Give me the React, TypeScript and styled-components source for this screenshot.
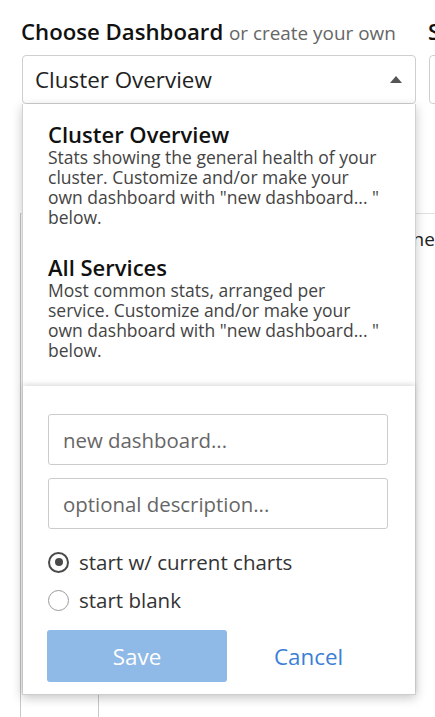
import React from 'react';
import styled, { createGlobalStyle } from 'styled-components';

const GlobalStyle = createGlobalStyle`
  html, body {
    margin: 0;
    padding: 0;
    background: #fff;
    overflow: hidden;
  }
  body {
    font-family: "Open Sans", "Liberation Sans", sans-serif;
    color: #222;
  }
  * {
    box-sizing: border-box;
  }
`;

const Page = styled.div`
  position: relative;
  width: 435px;
  height: 717px;
  overflow: hidden;
  padding-top: 19px;
`;

const Toolbar = styled.div`
  position: relative;
  z-index: 2;
  display: flex;
  gap: 13px;
  padding-left: 22px;
`;

const Field = styled.div`
  position: relative;
  flex: 0 0 394px;
`;

const Label = styled.div`
  height: 26px;
  margin: 0 0 10px -1px;
  font-size: 22.2px;
  font-weight: 600;
  line-height: 26px;
  color: #111;
  white-space: nowrap;
`;

const Hint = styled.span`
  font-size: 18.9px;
  font-weight: 400;
  line-height: 1;
  color: #666;
`;

const Select = styled.div`
  display: flex;
  align-items: center;
  justify-content: space-between;
  height: 49px;
  padding: 0 13px 0 12px;
  border: 1px solid #cfcfcf;
  border-radius: 4px;
  background: #fff;
  font-size: 22.4px;
  color: #222;
  white-space: nowrap;
`;

const Caret = styled.span`
  width: 0;
  height: 0;
  border-left: 6px solid transparent;
  border-right: 6px solid transparent;
  border-bottom: 7px solid #555;
`;

const Menu = styled.div`
  position: absolute;
  top: 100%;
  left: 0;
  width: 394px;
  z-index: 10;
  background: #fff;
  border: 1px solid #d2d2d2;
  border-top: none;
  box-shadow: 0 3px 10px rgba(0, 0, 0, 0.22);
`;

const OptionList = styled.div`
  padding-bottom: 16px;
`;

const Option = styled.div`
  padding: 17px 27px 10px 25px;
  cursor: pointer;
`;

const OptionTitle = styled.div`
  font-size: 22px;
  font-weight: 600;
  line-height: 26px;
  color: #111;
`;

const OptionText = styled.div`
  font-size: 17.5px;
  line-height: 20px;
  color: #444;
`;

const CreateForm = styled.div`
  position: relative;
  padding: 28px 27px 12px 25px;
  box-shadow: 0 -2px 5px rgba(0, 0, 0, 0.13);
`;

const TextInput = styled.input`
  display: block;
  width: 100%;
  height: 51px;
  margin: 0 0 13px;
  padding: 0 14px;
  border: 1px solid #cccccc;
  border-radius: 3px;
  font-family: inherit;
  font-size: 20.4px;
  color: #333;
  outline: none;

  &:last-of-type {
    margin-bottom: 0;
  }

  &::placeholder {
    color: #666;
  }
`;

const RadioGroup = styled.div`
  margin-top: 14px;
`;

const RadioRow = styled.label`
  display: flex;
  align-items: center;
  gap: 10px;
  height: 38px;
  font-size: 20.5px;
  color: #333;
  cursor: pointer;
`;

const RadioDot = styled.span<{ $checked?: boolean }>`
  display: flex;
  align-items: center;
  justify-content: center;
  flex: 0 0 21px;
  width: 21px;
  height: 21px;
  border-radius: 50%;
  border: ${({ $checked }) => ($checked ? '2.5px solid #4a4a4a' : '1.5px solid #9a9a9a')};
  background: #fff;

  &::after {
    content: '';
    display: ${({ $checked }) => ($checked ? 'block' : 'none')};
    width: 8px;
    height: 8px;
    border-radius: 50%;
    background: #4a4a4a;
  }
`;

const Actions = styled.div`
  display: flex;
  align-items: center;
  margin-top: 11px;
`;

const SaveButton = styled.button`
  width: 180px;
  height: 52px;
  margin-left: -1px;
  border: none;
  border-radius: 3px;
  background: #8fb9e6;
  color: #fff;
  font-family: inherit;
  font-size: 22.4px;
`;

const CancelButton = styled.button`
  margin-left: 27px;
  padding: 0 20px;
  border: none;
  background: none;
  color: #3b7fd6;
  font-family: inherit;
  font-size: 22.4px;
  cursor: pointer;
`;

const Board = styled.div`
  display: flex;
  height: 600px;
  margin: 109px 0 0 20px;
  border-top: 1px solid #e0e0e0;
  border-left: 1px solid #c8c8c8;
`;

const Sidebar = styled.div`
  flex: 0 0 78px;
  border-right: 1px solid #c8c8c8;
`;

const ChartArea = styled.div`
  display: flex;
  flex: 1;
  padding-top: 12px;
`;

const ChartTitle = styled.div<{ $width: number }>`
  flex: 0 0 ${({ $width }) => $width}px;
  font-size: 19px;
  line-height: 26px;
  color: #222;
  white-space: nowrap;
`;

const options = [
  {
    title: 'Cluster Overview',
    text: 'Stats showing the general health of your cluster. Customize and/or make your own dashboard with "new dashboard... " below.',
  },
  {
    title: 'All Services',
    text: 'Most common stats, arranged per service. Customize and/or make your own dashboard with "new dashboard... " below.',
  },
];

export default function App() {
  return (
    <Page>
      <GlobalStyle />
      <Toolbar>
        <Field>
          <Label>
            Choose Dashboard <Hint>or create your own</Hint>
          </Label>
          <Select>
            <span>Cluster Overview</span>
            <Caret />
          </Select>
          <Menu>
            <OptionList>
              {options.map((o) => (
                <Option key={o.title}>
                  <OptionTitle>{o.title}</OptionTitle>
                  <OptionText>{o.text}</OptionText>
                </Option>
              ))}
            </OptionList>
            <CreateForm>
              <TextInput placeholder="new dashboard..." />
              <TextInput placeholder="optional description..." />
              <RadioGroup>
                <RadioRow>
                  <RadioDot $checked />
                  start w/ current charts
                </RadioRow>
                <RadioRow>
                  <RadioDot />
                  start blank
                </RadioRow>
              </RadioGroup>
              <Actions>
                <SaveButton>Save</SaveButton>
                <CancelButton>Cancel</CancelButton>
              </Actions>
            </CreateForm>
          </Menu>
        </Field>
        <Field>
          <Label>Services</Label>
          <Select>
            <span>All</span>
            <Caret />
          </Select>
        </Field>
      </Toolbar>
      <Board>
        <Sidebar />
        <ChartArea>
          <ChartTitle $width={284}>Request Rate</ChartTitle>
          <ChartTitle $width={200}>Owner Latency</ChartTitle>
        </ChartArea>
      </Board>
    </Page>
  );
}
